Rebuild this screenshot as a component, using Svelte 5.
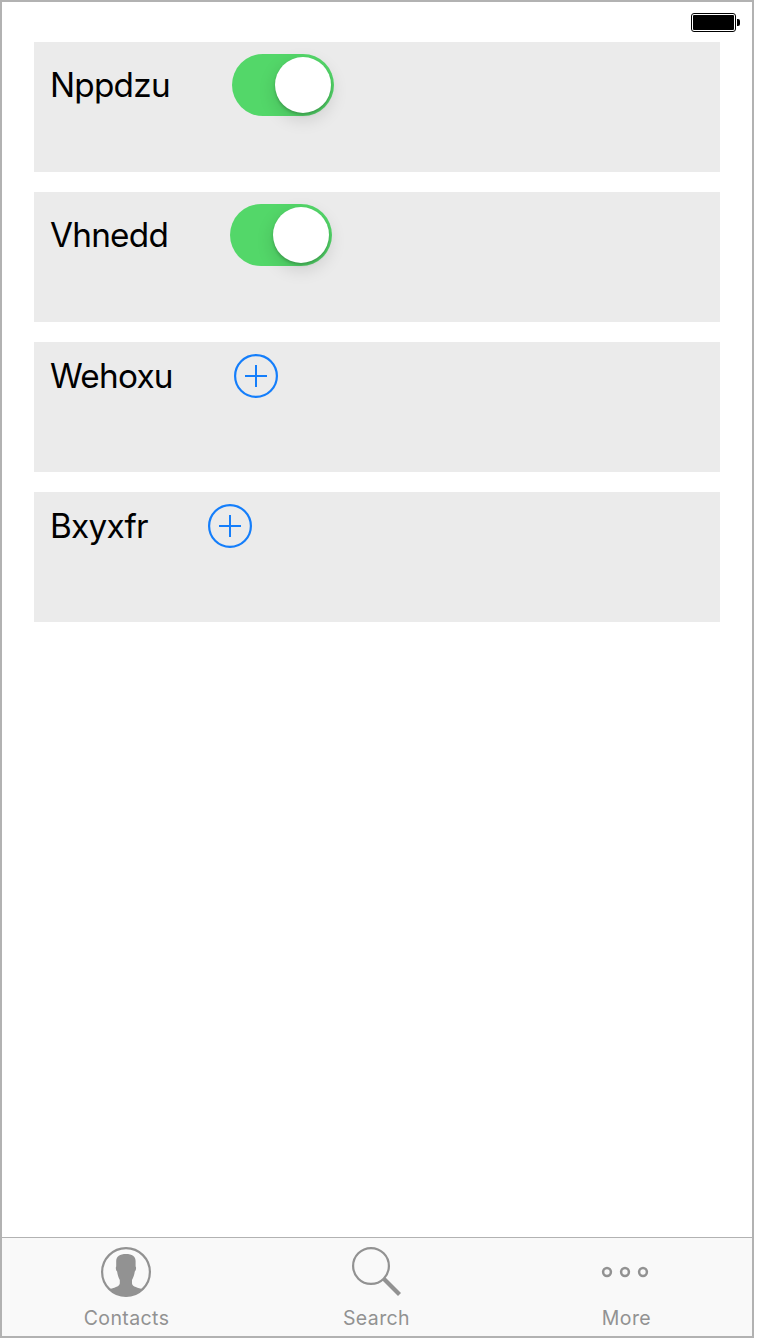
<script>
  const rows = [
    { label: 'Nppdzu', width: 122, kind: 'switch' },
    { label: 'Vhnedd', width: 120, kind: 'switch' },
    { label: 'Wehoxu', width: 124, kind: 'add' },
    { label: 'Bxyxfr', width: 98, kind: 'add' }
  ];
</script>

<div class="phone">
  <header>
    <svg width="50" height="20" viewBox="0 0 50 20">
      <rect x="0.5" y="0.5" width="44" height="18" rx="2.5" fill="#fff" stroke="#000" />
      <rect x="2" y="2" width="41" height="15" rx="1" />
      <path d="M46 6h1a2 2 0 0 1 2 2v3a2 2 0 0 1-2 2h-1z" />
    </svg>
  </header>

  <main>
    {#each rows as row}
      <section>
        <div class="line" class:tall={row.kind === 'switch'}>
          <span class="label" style="width: {row.width}px">{row.label}</span>
          {#if row.kind === 'switch'}
            <div class="switch"><div class="thumb"></div></div>
          {:else}
            <svg width="44" height="44" viewBox="0 0 44 44" fill="none" stroke="#147efb" stroke-width="2">
              <circle cx="22" cy="22" r="20.9" stroke-width="2.2" />
              <path d="M11 22H33M22 11V33" />
            </svg>
          {/if}
        </div>
      </section>
    {/each}
  </main>

  <nav>
    <div class="tab">
      <svg width="50" height="50" viewBox="0 0 50 50">
        <circle cx="25" cy="25" r="23.9" fill="none" stroke="#929292" stroke-width="2.2" />
        <path fill="#929292" d="M15.2 14C15.2 9.5 19 7 25 7S34.6 9.5 34.6 14V19.5C35.4 20 35.2 23.5 33.8 24.5C33.3 28 32.2 31 31 33V36.5C31.5 40 37 40.5 42 42.5A25 25 0 0 1 8 42.5C13 40.5 18 40 18.8 36.5V33C17.6 31 16.6 28 16.1 24.5C14.8 23.5 14.5 20 15.2 19.5Z" />
      </svg>
      <span>Contacts</span>
    </div>
    <div class="tab">
      <svg width="50" height="50" viewBox="0 0 50 50" fill="none" stroke="#929292">
        <circle cx="20" cy="19" r="17.9" stroke-width="2.2" />
        <path d="M32.5 31.5L48.5 47.5" stroke-width="4.2" />
      </svg>
      <span>Search</span>
    </div>
    <div class="tab">
      <svg width="50" height="50" viewBox="0 0 50 50" fill="none" stroke="#929292" stroke-width="2.5">
        <circle cx="6" cy="25" r="3.9" /><circle cx="24" cy="25" r="3.9" /><circle cx="42" cy="25" r="3.9" />
      </svg>
      <span>More</span>
    </div>
  </nav>
</div>

<style>
  :global(body) { background: #fff; }
  .phone {
    box-sizing: border-box;
    width: 754px;
    height: 1338px;
    border: 2px solid #b2b2b2;
    display: flex;
    flex-direction: column;
    font-family: Inter, "Liberation Sans", sans-serif;
    background: #fff;
  }
  svg { display: block; flex: none; }
  header {
    height: 40px;
    box-sizing: border-box;
    display: flex;
    justify-content: flex-end;
    padding: 11px 11px 0 0;
  }
  main {
    flex: 1;
    display: flex;
    flex-direction: column;
    gap: 20px;
    padding: 0 32px;
  }
  section {
    height: 130px;
    box-sizing: border-box;
    padding: 12px 16px;
    background: #ebebeb;
  }
  .line { display: flex; align-items: center; gap: 60px; height: 44px; }
  .line.tall { height: 62px; }
  .label {
    flex: none;
    font-size: 33.3px;
    line-height: 42px;
    white-space: nowrap;
    letter-spacing: -0.75px;
    color: #000;
  }
  .switch {
    box-sizing: border-box;
    width: 102px;
    height: 62px;
    padding: 3px;
    border-radius: 31px;
    background: #53d769;
    display: flex;
    justify-content: flex-end;
  }
  .thumb {
    width: 56px;
    height: 56px;
    border-radius: 50%;
    background: #fff;
    box-shadow: 0 6px 18px rgba(0, 0, 0, 0.14), 0 2px 3px rgba(0, 0, 0, 0.2);
  }
  nav {
    box-sizing: border-box;
    height: 99px;
    border-top: 1px solid #b2b2b2;
    background: #f9f9f9;
    display: grid;
    grid-template-columns: 248px 252px 248px;
  }
  .tab {
    display: flex;
    flex-direction: column;
    align-items: center;
    padding-top: 9px;
  }
  .tab span {
    margin-top: 9px;
    padding-left: 1px;
    font-size: 19.5px;
    line-height: 24px;
    letter-spacing: 0.4px;
    color: #929292;
  }
</style>
